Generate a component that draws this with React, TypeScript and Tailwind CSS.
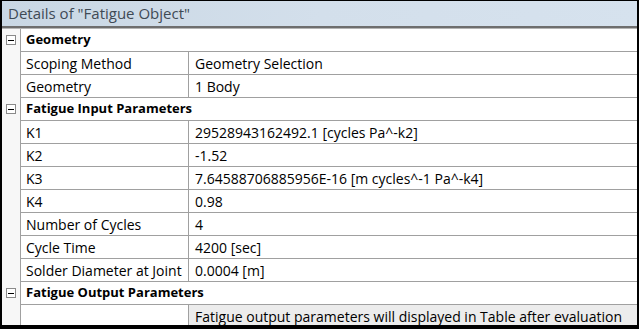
import React from 'react';

type Row =
  | { kind: 'header'; label: string }
  | { kind: 'prop'; name: string; value: string; shaded?: boolean };

const rows: Row[] = [
  { kind: 'header', label: 'Geometry' },
  { kind: 'prop', name: 'Scoping Method', value: 'Geometry Selection' },
  { kind: 'prop', name: 'Geometry', value: '1 Body' },
  { kind: 'header', label: 'Fatigue Input Parameters' },
  { kind: 'prop', name: 'K1', value: '29528943162492.1 [cycles Pa^-k2]' },
  { kind: 'prop', name: 'K2', value: '-1.52' },
  { kind: 'prop', name: 'K3', value: '7.64588706885956E-16 [m cycles^-1 Pa^-k4]' },
  { kind: 'prop', name: 'K4', value: '0.98' },
  { kind: 'prop', name: 'Number of Cycles', value: '4' },
  { kind: 'prop', name: 'Cycle Time', value: '4200 [sec]' },
  { kind: 'prop', name: 'Solder Diameter at Joint', value: '0.0004 [m]' },
  { kind: 'header', label: 'Fatigue Output Parameters' },
  {
    kind: 'prop',
    name: '',
    value: 'Fatigue output parameters will displayed in Table after evaluation',
    shaded: true,
  },
];

const MinusBox = () => (
  <div className="w-[10px] h-[10px] border border-[#8a8a8a] bg-white flex items-center justify-center">
    <div className="w-[6px] h-px bg-black" />
  </div>
);

export default function App() {
  return (
    <div
      className="w-[639px] h-[329px] overflow-hidden bg-white border-black border-t border-l-2 border-r-2 border-b-4 text-[14px] text-black"
      style={{ fontFamily: '"Open Sans", "Noto Sans", sans-serif' }}
    >
      {/* title bar */}
      <div className="h-[25px] bg-gradient-to-r from-[#c9d7e4] via-[#d3dfeb] to-[#d6e2ee] flex items-center pl-[6px] text-[15px] text-[#3f4a55]">
        Details of "Fatigue Object"
      </div>
      <div className="h-[2px] bg-[#6e6e6e]" />
      <div className="h-px bg-[#b4b4b4]" />

      <div className="flex flex-col">
        {rows.map((r, i) => (
          <div key={i} className="flex h-[23px]">
            <div className="w-[19px] shrink-0 border-r border-[#a0a0a0] bg-[#f7f7f7] flex items-start pt-[6px] justify-center">
              {r.kind === 'header' && <MinusBox />}
            </div>
            {r.kind === 'header' ? (
              <div className="flex-1 border-b border-[#a0a0a0] flex items-center pl-[5px] font-bold text-[13px]">
                {r.label}
              </div>
            ) : (
              <>
                <div className="w-[168px] shrink-0 border-b border-r border-[#a0a0a0] flex items-center pl-[5px] whitespace-nowrap overflow-hidden">
                  {r.name}
                </div>
                <div
                  className={`flex-1 border-b border-[#a0a0a0] flex items-center pl-[6px] whitespace-nowrap overflow-hidden ${
                    r.shaded ? 'bg-[#ececec]' : ''
                  }`}
                >
                  {r.value}
                </div>
              </>
            )}
          </div>
        ))}
      </div>
    </div>
  );
}
